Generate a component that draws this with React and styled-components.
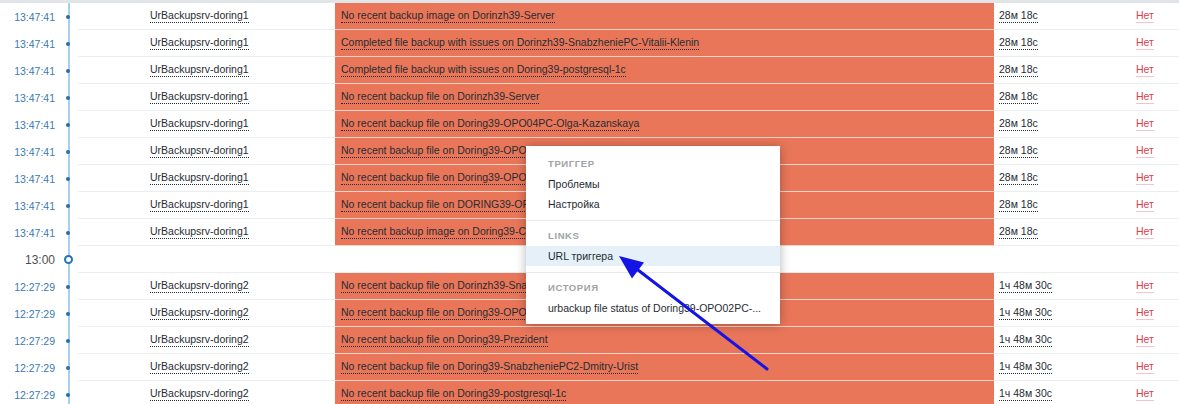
import React from "react";
import styled, { createGlobalStyle } from "styled-components";

const Global = createGlobalStyle`
  html, body {
    margin: 0;
    padding: 0;
    background: #ffffff;
  }
  body {
    font-family: "Liberation Sans", Arial, sans-serif;
    font-size: 10.5px;
    color: #1f2c33;
  }
`;

const Page = styled.div`
  position: relative;
  width: 1179px;
  height: 404px;
  overflow: hidden;
  background: #fff;
  border-top: 3px solid #e2e5e7;
  box-sizing: border-box;
`;

const Row = styled.div`
  display: grid;
  grid-template-columns: 60px 18px 1fr;
  height: 27px;
`;

const TimeCell = styled.div`
  display: flex;
  align-items: center;
  justify-content: flex-end;
  padding-right: 5px;
  color: ${(p) => (p.$marker ? "#4a4f52" : "#3a7ab2")};
  font-size: ${(p) => (p.$marker ? "12px" : "10.5px")};
`;

const Axis = styled.div`
  display: flex;
  align-items: center;
  justify-content: center;
  background: linear-gradient(#a9d0e4, #a9d0e4) no-repeat 8px 0 / 2px 100%;
  padding-right: 1px;
`;

const Dot = styled.span`
  width: 4px;
  height: 4px;
  border-radius: 50%;
  background: #2b6ca6;
  margin-left: -1px;
`;

const Ring = styled.span`
  width: 5px;
  height: 5px;
  border-radius: 50%;
  background: #fff;
  border: 2px solid #2373b5;
  margin-left: -1px;
`;

const Body = styled.div`
  display: grid;
  grid-template-columns: 68px 189px 659px 137px 1fr;
  border-bottom: 1px solid #ebeef0;
`;

const Cell = styled.div`
  display: flex;
  align-items: center;
  padding-left: ${(p) => p.$pad || 4}px;
  white-space: nowrap;
  overflow: hidden;
  background: ${(p) => (p.$severe ? "#e97659" : "transparent")};
  box-shadow: ${(p) => (p.$severe ? "0 1px 0 #f0d3ca" : "none")};
`;

const Link = styled.span`
  color: #1f2c33;
  border-bottom: 1px dotted #1f2c33;
  line-height: 12px;
  padding-bottom: 1px;
`;

const Ack = styled.span`
  color: #d8404f;
  border-bottom: 1px solid rgba(216, 64, 79, 0.3);
  line-height: 12px;
  padding-bottom: 1px;
`;

const Menu = styled.div`
  position: absolute;
  left: 526px;
  top: 143px;
  width: 254px;
  background: #fff;
  box-shadow: 0 1px 10px rgba(0, 0, 0, 0.3);
`;

const Section = styled.div`
  padding: 8px 0 6px;
  & + & {
    border-top: 1px solid #e6e8ea;
    padding-top: 5px;
  }
`;

const MenuHeader = styled.div`
  height: 20px;
  line-height: 20px;
  padding-left: 22px;
  font-size: 9.5px;
  font-weight: bold;
  letter-spacing: 0.6px;
  text-transform: uppercase;
  color: #9ea3a6;
`;

const MenuItem = styled.div`
  height: 20px;
  line-height: 20px;
  padding: 0 17px 0 22px;
  font-size: 10.5px;
  color: #1f2c33;
  white-space: nowrap;
  overflow: hidden;
  background: ${(p) => (p.$active ? "#e6f0f8" : "transparent")};
`;

const Arrow = styled.svg`
  position: absolute;
  left: 0;
  top: -3px;
  pointer-events: none;
`;

const first = [
  "No recent backup image on Dorinzh39-Server",
  "Completed file backup with issues on Dorinzh39-SnabzheniePC-Vitalii-Klenin",
  "Completed file backup with issues on Doring39-postgresql-1c",
  "No recent backup file on Dorinzh39-Server",
  "No recent backup file on Doring39-OPO04PC-Olga-Kazanskaya",
  "No recent backup file on Doring39-OPO02PC-Ekaterina-Ivanova",
  "No recent backup file on Doring39-OPO03PC-Buhgalteria",
  "No recent backup file on DORING39-OFFICE-PC",
  "No recent backup image on Doring39-Cashier",
];

const second = [
  "No recent backup file on Dorinzh39-SnabzheniePC-Vitalii-Klenin",
  "No recent backup file on Doring39-OPO02PC-Ekaterina-Ivanova",
  "No recent backup file on Doring39-Prezident",
  "No recent backup file on Doring39-SnabzheniePC2-Dmitry-Urist",
  "No recent backup file on Doring39-postgresql-1c",
];

function ProblemRow({ time, host, name, age }) {
  return (
    <Row>
      <TimeCell>{time}</TimeCell>
      <Axis>
        <Dot />
      </Axis>
      <Body>
        <Cell />
        <Cell>
          <Link>{host}</Link>
        </Cell>
        <Cell $severe $pad={6}>
          <Link>{name}</Link>
        </Cell>
        <Cell $pad={5}>
          <Link>{age}</Link>
        </Cell>
        <Cell $pad={5}>
          <Ack>Нет</Ack>
        </Cell>
      </Body>
    </Row>
  );
}

export default function App() {
  return (
    <>
      <Global />
      <Page>
        {first.map((n, i) => (
          <ProblemRow
            key={"a" + i}
            time="13:47:41"
            host="UrBackupsrv-doring1"
            name={n}
            age="28м 18с"
          />
        ))}
        <Row>
          <TimeCell $marker>13:00</TimeCell>
          <Axis>
            <Ring />
          </Axis>
          <Body />
        </Row>
        {second.map((n, i) => (
          <ProblemRow
            key={"b" + i}
            time="12:27:29"
            host="UrBackupsrv-doring2"
            name={n}
            age="1ч 48м 30с"
          />
        ))}

        <Menu>
          <Section>
            <MenuHeader>Триггер</MenuHeader>
            <MenuItem>Проблемы</MenuItem>
            <MenuItem>Настройка</MenuItem>
          </Section>
          <Section>
            <MenuHeader>Links</MenuHeader>
            <MenuItem $active>URL триггера</MenuItem>
          </Section>
          <Section>
            <MenuHeader>История</MenuHeader>
            <MenuItem>urbackup file status of Doring39-OPO02PC-...</MenuItem>
          </Section>
        </Menu>

        <Arrow width="1179" height="404" viewBox="0 0 1179 404">
          <line
            x1="767"
            y1="369"
            x2="638"
            y2="270"
            stroke="#1414e6"
            strokeWidth="3"
            strokeLinecap="round"
          />
          <polygon points="619,256 644,262.5 632,278.5" fill="#1414e6" />
        </Arrow>
      </Page>
    </>
  );
}
